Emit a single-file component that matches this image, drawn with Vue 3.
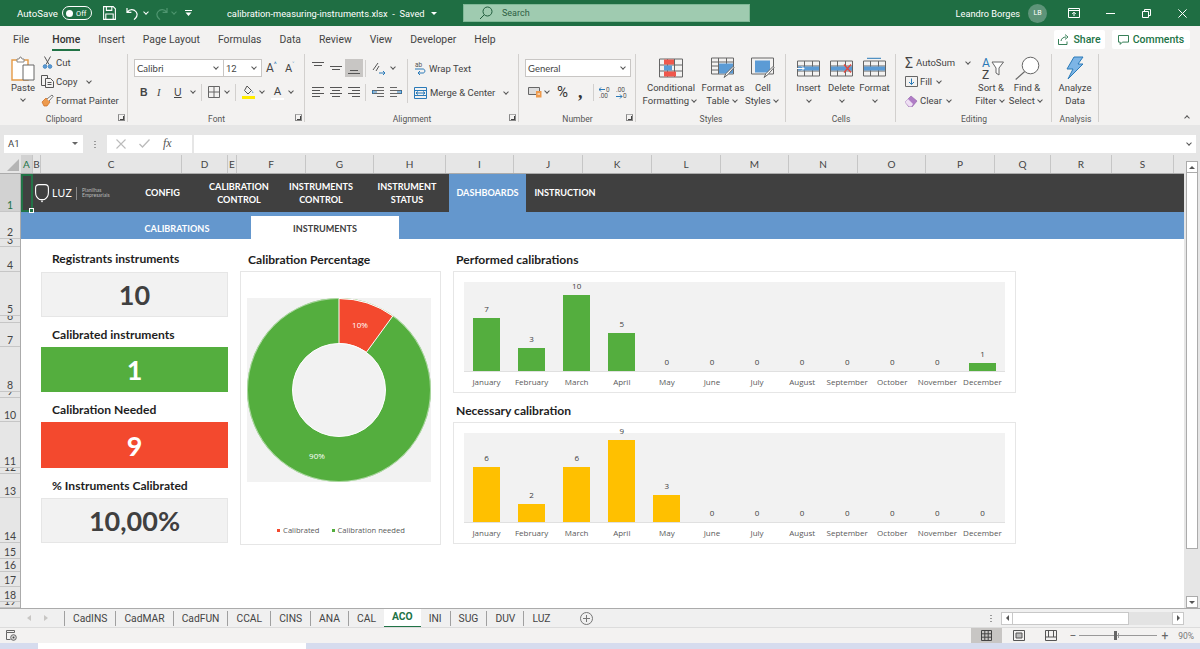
<script setup>
const menu = ['File', 'Home', 'Insert', 'Page Layout', 'Formulas', 'Data', 'Review', 'View', 'Developer', 'Help']
const columns = ['A', 'B', 'C', 'D', 'E', 'F', 'G', 'H', 'I', 'J', 'K', 'L', 'M', 'N', 'O', 'P', 'Q', 'R', 'S']
const rows = ['1', '2', '3', '4', '5', '6', '7', '8', '9', '10', '11', '12', '13', '14', '15', '16', '17', '18', '19']
const tabs = ['CadINS', 'CadMAR', 'CadFUN', 'CCAL', 'CINS', 'ANA', 'CAL', 'ACO', 'INI', 'SUG', 'DUV', 'LUZ']
const months = ['January', 'February', 'March', 'April', 'May', 'June', 'July', 'August', 'September', 'October', 'November', 'December']

const kpis = [
  { title: 'Registrants instruments', value: '10', kind: 'plain' },
  { title: 'Calibrated instruments', value: '1', kind: 'green' },
  { title: 'Calibration Needed', value: '9', kind: 'red' },
  { title: '% Instruments Calibrated', value: '10,00%', kind: 'plain' }
]

const charts = [
  { title: 'Performed calibrations', kind: 'green', unit: 7.56, values: [7, 3, 10, 5, 0, 0, 0, 0, 0, 0, 0, 1] },
  { title: 'Necessary calibration', kind: 'yellow', unit: 9.1, values: [6, 2, 6, 9, 3, 0, 0, 0, 0, 0, 0, 0] }
]

const cellButtons = [
  { label: 'Insert', kind: 'insert' },
  { label: 'Delete', kind: 'delete' },
  { label: 'Format', kind: 'format' }
]
</script>

<template>
  <div class="app">
    <header class="titlebar">
      <span class="autosave">AutoSave</span>
      <span class="toggle"><i></i>Off</span>
      <svg class="qa-save" width="13" height="14" viewBox="0 0 13 14" fill="none" stroke="#fff" stroke-width="1.1">
        <path d="M.6.6h9.6l2.2 2.2v10.6H.6z" /><path d="M3.4.8v3.6h5.4V.8M2.800 13.200V8h7.400v5.200" />
      </svg>
      <svg class="qa-undo" width="13" height="13" viewBox="0 0 13 13" fill="none" stroke="#fff" stroke-width="1.2">
        <path d="M1 1v4.400h4.400M1.200 5.200C3 2.800 6 2 8.600 3.400c2.800 1.600 3.400 5 1 7.600L8 12.600" />
      </svg>
      <span class="caret white qa-c1"></span>
      <svg class="qa-redo" width="13" height="13" viewBox="0 0 13 13" fill="none" stroke="#4f9670" stroke-width="1.2">
        <path d="M12 1v4.400H7.600M11.800 5.200C10 2.800 7 2 4.400 3.400c-2.800 1.600-3.400 5-1 7.600L5 12.600" />
      </svg>
      <span class="caret dim qa-c2"></span>
      <svg class="qa-more" width="7" height="6" viewBox="0 0 7 6" fill="#fff"><path d="M0 0h7v1H0zM.5 2.400h6L3.500 6z" /></svg>
      <span class="filename">calibration-measuring-instruments.xlsx &nbsp;-&nbsp; Saved</span>
      <svg class="saved-arrow" width="6" height="3" viewBox="0 0 6 3" fill="#fff"><path d="M0 0h6L3 3z" /></svg>
      <div class="search">
        <svg width="14" height="14" viewBox="0 0 14 14" fill="none" stroke="#205c3c" stroke-width="1">
          <circle cx="8.500" cy="5.500" r="4.500" /><path d="M5.200 8.800 1 13" />
        </svg>
        <span>Search</span>
      </div>
      <span class="username">Leandro Borges</span>
      <span class="avatar">LB</span>
      <svg class="win-ribbon" width="12" height="10" viewBox="0 0 12 10" fill="none" stroke="#fff" stroke-width="1">
        <path d="M.5.5h11v9H.5zM.5 2.500h11" /><path d="M6 8V4.400M4.200 6 6 4.200 7.800 6" />
      </svg>
      <svg class="win-min" width="9" height="1" viewBox="0 0 9 1"><path d="M0 0h9v1H0z" fill="#fff" /></svg>
      <svg class="win-max" width="9" height="9" viewBox="0 0 9 9" fill="none" stroke="#fff" stroke-width="1">
        <path d="M.5 2.500h6v6h-6zM2.500 2.500v-2h6v6h-2" />
      </svg>
      <svg class="win-close" width="9" height="9" viewBox="0 0 9 9" stroke="#fff" stroke-width="1"><path d="m.4.4 8.200 8.200M8.600.4.4 8.600" /></svg>
    </header>

    <nav class="menubar">
      <span v-for="item in menu" :key="item" :class="['menu-item', { active: item === 'Home' }]">{{ item }}</span>
      <div class="menu-right">
        <button class="pill share">
          <svg width="11" height="11" viewBox="0 0 11 11" fill="none" stroke="#217346" stroke-width=".9">
            <path d="M.5 5v5.500h8.500V7.500M3 7c.4-2.600 2.400-4 5-4M7 .6 10 3 7 5.400" />
          </svg>
          Share
        </button>
        <button class="pill comments">
          <svg width="11" height="10" viewBox="0 0 11 10" fill="none" stroke="#217346" stroke-width=".9">
            <path d="M.5.5h10v6.600H4.400L2.200 9.400V7.100H.5z" />
          </svg>
          Comments
        </button>
      </div>
    </nav>

    <section class="ribbon">
      <!-- clipboard -->
      <div class="group g-clipboard">
        <div class="group-body clip-body">
          <div class="big-btn paste">
            <svg width="24" height="25" viewBox="0 0 24 25" fill="none">
              <path d="M1 4h16v20H1z" stroke="#e59a45" stroke-width="1.400" fill="#fff" />
              <path d="M6 3h2l1-2h1l1 2h2v3H6z" fill="#fff" stroke="#8a8886" />
              <path d="M12 9h11v15H12z" fill="#fff" stroke="#666" />
            </svg>
            <span class="paste-text">Paste</span>
            <span class="caret"></span>
          </div>
          <div class="clip-list">
            <div class="small-row">
              <svg width="13" height="13" viewBox="0 0 13 13" fill="none" stroke="#555">
                <path d="M3.500.5 8 8.500M9.500.5 5 8.500" /><circle cx="4" cy="10.500" r="1.800" fill="#5b9bd5" stroke="#4a8ac4" /><circle cx="9" cy="10.500" r="1.800" fill="#5b9bd5" stroke="#4a8ac4" />
              </svg>
              <span>Cut</span>
            </div>
            <div class="small-row">
              <svg width="13" height="13" viewBox="0 0 13 13" fill="none" stroke="#555">
                <path d="M.5.5h6v10h-6z" /><path d="M4.500 3.500h5l3 3v6h-8z" fill="#f3f2f1" /><path d="M6.500 7.500h4M6.500 9.500h4" />
              </svg>
              <span>Copy</span>
              <span class="caret copy-caret"></span>
            </div>
            <div class="small-row">
              <svg width="13" height="13" viewBox="0 0 13 13" fill="none">
                <path d="m1 8 4-4 4 4-3 4H3z" fill="#ed9a4d" stroke="#c8691c" stroke-width=".7" />
                <path d="m6 5 5-4 1.200 1.200L8 7" fill="#fff" stroke="#555" stroke-width=".8" />
              </svg>
              <span>Format Painter</span>
            </div>
          </div>
        </div>
        <span class="group-label">Clipboard</span>
        <i class="launcher"></i>
      </div>

      <!-- font -->
      <div class="group g-font">
        <div class="group-body tool-rows">
          <div class="tool-row">
            <div class="select font-name"><span>Calibri</span><span class="caret"></span></div>
            <div class="select font-size"><span>12</span><span class="caret"></span></div>
            <span class="grow-a">A<sup>^</sup></span>
            <span class="grow-a shrink">A<sup>˅</sup></span>
          </div>
          <div class="tool-row row-font2">
            <b class="glyph">B</b>
            <i class="glyph serif">I</i>
            <u class="glyph last">U</u>
            <span class="caret"></span>
            <span class="vsep"></span>
            <svg width="12" height="12" viewBox="0 0 12 12" fill="none" stroke="#666"><path d="M.5.5h11v11H.5zM6 .5v11M.5 6h11" /></svg>
            <span class="caret"></span>
            <span class="vsep"></span>
            <svg width="13" height="14" viewBox="0 0 13 14" fill="none">
              <path d="m5 1 4.500 4.500L6 9 2.500 5.500z" stroke="#555" /><path d="M10.500 6c.8 1 1 1.800.5 2.300-.5-.2-.8-1.200-.5-2.300z" fill="#2a7ab8" />
              <path d="M0 11h13v3H0z" fill="#ffeb00" />
            </svg>
            <span class="caret"></span>
            <span class="color-a">A</span>
            <span class="caret"></span>
          </div>
        </div>
        <span class="group-label">Font</span>
        <i class="launcher"></i>
      </div>

      <!-- alignment -->
      <div class="group g-align">
        <div class="group-body align-body">
          <div class="tool-rows align-rows">
            <div class="tool-row row-align">
              <span class="al al-top"><i></i><i></i></span>
              <span class="al al-mid"><i></i><i></i></span>
              <span class="al al-bot on"><i></i><i></i></span>
              <span class="vsep"></span>
              <svg width="14" height="13" viewBox="0 0 14 13" fill="none" stroke="#555">
                <path d="m1 8 5-7M4 9l3-5" stroke-width="1" /><path d="M7 11h6" stroke="#2a7ab8" /><path d="m11 9 2 2-2 2" stroke="#2a7ab8" />
              </svg>
              <span class="caret"></span>
            </div>
            <div class="tool-row row-align">
              <span class="al al-l"><i></i><i></i><i></i><i></i></span>
              <span class="al al-c"><i></i><i></i><i></i><i></i></span>
              <span class="al al-r"><i></i><i></i><i></i><i></i></span>
              <span class="vsep"></span>
              <svg width="12" height="10" viewBox="0 0 12 10" fill="none" stroke="#666"><path d="M5 .5h7M5 9.500h7M0 3.500h12M0 6.500h12" /><path d="M5 5H0m2-2L0 5l2 2" stroke="#2a7ab8" /></svg>
              <svg class="indent2" width="12" height="10" viewBox="0 0 12 10" fill="none" stroke="#666"><path d="M0 .5h7M0 9.500h7M0 3.500h12M0 6.500h12" /><path d="M7 5h5m-2-2 2 2-2 2" stroke="#2a7ab8" /></svg>
            </div>
          </div>
          <span class="vsep tall"></span>
          <div class="wrap-col">
            <div class="small-row">
              <svg width="12" height="13" viewBox="0 0 12 13" fill="none" stroke="#2a7ab8">
                <text x="1" y="5" class="dec">ab</text>
                <path d="M1 7h8c2.500 0 2.500 4 0 4H4m2-2-2 2 2 2" />
              </svg>
              <span>Wrap Text</span>
            </div>
            <div class="small-row merge-row">
              <svg width="13" height="12" viewBox="0 0 13 12" fill="none" stroke="#2a7ab8">
                <path d="M.5.5h12v11H.5z" /><path d="M.5 3.500h12M.5 8.500h12" /><path d="M2 6h9M4 4.500 2 6l2 1.500M9 4.500 11 6 9 7.500" />
              </svg>
              <span>Merge &amp; Center</span>
              <span class="caret merge-caret"></span>
            </div>
          </div>
        </div>
        <span class="group-label">Alignment</span>
        <i class="launcher"></i>
      </div>

      <!-- number -->
      <div class="group g-number">
        <div class="group-body tool-rows">
          <div class="tool-row">
            <div class="select number-format"><span>General</span><span class="caret"></span></div>
          </div>
          <div class="tool-row row-number">
            <svg width="14" height="12" viewBox="0 0 14 12" fill="none">
              <path d="M.5 1.500h11v7H.5z" stroke="#666" fill="#ddd" /><path d="M8 5h5.500v6.500H8z" fill="#ed9a4d" /><path d="M9.500 8h2.500" stroke="#fff" />
            </svg>
            <span class="caret"></span>
            <span class="percent">%</span>
            <b class="comma">,</b>
            <span class="vsep"></span>
            <svg width="13" height="13" viewBox="0 0 13 13" fill="none" stroke="#2a7ab8"><path d="M6 3.500H0m2-2-2 2 2 2" /><text x="7" y="6" class="dec">0</text><text x="0" y="12" class="dec">.00</text></svg>
            <svg class="dec-2" width="13" height="13" viewBox="0 0 13 13" fill="none" stroke="#2a7ab8"><path d="M0 10.500h6m-2-2 2 2-2 2" /><text x="0" y="6" class="dec">.00</text><text x="7" y="12" class="dec">0</text></svg>
          </div>
        </div>
        <span class="group-label">Number</span>
        <i class="launcher"></i>
      </div>

      <!-- styles -->
      <div class="group g-styles">
        <div class="group-body big-row">
          <div class="big-btn styles-cf">
            <svg width="24" height="19" viewBox="0 0 24 19" fill="none" stroke="#666">
              <path d="M.5.5h23v18H.5zM8.500.5v18M15.500.5v18M.5 6.500h23M.5 12.500h23" />
              <path d="M5 1h10v5H5zM5 13h12v5H5z" fill="#f0574c" stroke="none" /><path d="M5 7h8v5H5z" fill="#5b9bd5" stroke="none" />
            </svg>
            <span>Conditional<br />Formatting <i class="caret"></i></span>
          </div>
          <div class="big-btn styles-ft">
            <svg width="24" height="21" viewBox="0 0 24 21" fill="none" stroke="#666">
              <path d="M.5.5h22v16H.5zM.5 4.500h22M.5 8.500h22M.5 12.500h22M7.500.500v16M15.500.500v16" />
              <path d="M8 6h14v10H8z" fill="#5b9bd5" stroke="none" /><path d="m13 20 2-4 7-7 1 1-6 7z" fill="#fff" stroke="#666" />
            </svg>
            <span>Format as<br />Table <i class="caret"></i></span>
          </div>
          <div class="big-btn styles-cs">
            <svg width="24" height="21" viewBox="0 0 24 21" fill="none" stroke="#666">
              <path d="M.5.500h22v16H.5z" /><path d="M4 3h15v12H4z" fill="#5b9bd5" stroke="none" /><path d="m13 20 2-4 7-7 1 1-6 7z" fill="#fff" stroke="#666" />
            </svg>
            <span>Cell<br />Styles <i class="caret"></i></span>
          </div>
        </div>
        <span class="group-label">Styles</span>
      </div>

      <!-- cells -->
      <div class="group g-cells">
        <div class="group-body big-row">
          <div v-for="btn in cellButtons" :key="btn.label" class="big-btn cell-btn">
            <svg width="24" height="21" viewBox="0 0 24 21" fill="none" stroke="#666">
              <path d="M.5 3.500h22v15H.5zM.5 8.500h22M.5 13.500h22M7.500 3.500v15M15.500 3.500v15" />
              <path d="M1 9h21v4H1z" fill="#5b9bd5" stroke="none" />
              <path v-if="btn.kind === 'delete'" d="m14 7 7 8M21 7l-7 8" stroke="#e8443a" stroke-width="1.200" />
              <path v-if="btn.kind === 'format'" d="M4 .8h14" stroke="#2a7ab8" />
              <path v-if="btn.kind === 'insert'" d="M0 11h7m-2-2 2 2-2 2" stroke="#fff" />
            </svg>
            <span>{{ btn.label }}</span>
            <span class="caret"></span>
          </div>
        </div>
        <span class="group-label">Cells</span>
      </div>

      <!-- editing -->
      <div class="group g-editing">
        <div class="group-body editing-body">
          <div class="edit-list">
            <div class="small-row">
              <span class="sigma">Σ</span><span>AutoSum</span><span class="caret sum-caret"></span>
            </div>
            <div class="small-row">
              <svg width="13" height="11" viewBox="0 0 13 11" fill="none" stroke="#666">
                <path d="M.5.500h12v10H.5z" /><path d="M6.500 2.500v6M4 6l2.500 2.500L9 6" stroke="#2a7ab8" />
              </svg>
              <span>Fill</span><span class="caret"></span>
            </div>
            <div class="small-row">
              <svg width="13" height="12" viewBox="0 0 13 12" fill="none">
                <path d="m0 7 6-6 6 5-5 6H4z" fill="#b07cc6" stroke="#9261a8" stroke-width=".6" /><path d="m0 7 3-3 5 5-1.500 2.500H4z" fill="#eedff3" />
              </svg>
              <span>Clear</span><span class="caret"></span>
            </div>
          </div>
          <div class="big-btn sort-btn">
            <svg class="sort-icon" width="25" height="24" viewBox="0 0 25 24" fill="none">
              <text x="3" y="11" class="az az-a">A</text>
              <text x="3" y="23" class="az">Z</text>
              <path d="M13 6h11.500l-4.500 6v7l-3-2v-5z" fill="#fff" stroke="#666" />
            </svg>
            <span>Sort &amp;<br />Filter <i class="caret"></i></span>
          </div>
          <div class="big-btn find-btn">
            <svg width="25" height="24" viewBox="0 0 25 24" fill="none" stroke="#666">
              <circle cx="15.500" cy="9.500" r="8.300" fill="#fff" /><path d="m9.700 15.500-9 8" stroke-width="1.100" />
            </svg>
            <span>Find &amp;<br />Select <i class="caret"></i></span>
          </div>
        </div>
        <span class="group-label">Editing</span>
      </div>

      <!-- analysis -->
      <div class="group g-analysis">
        <div class="group-body big-row">
          <div class="big-btn analyze">
            <svg width="18" height="24" viewBox="0 0 18 24" fill="#7db5e6" stroke="#2a7ab8">
              <path d="M8 1h9l-5 7h5L2 23l5-10H1z" />
            </svg>
            <span>Analyze<br />Data</span>
          </div>
        </div>
        <span class="group-label">Analysis</span>
      </div>

      <span class="caret collapse"></span>
    </section>

    <section class="formulabar">
      <div class="namebox"><span>A1</span><svg width="6" height="3" viewBox="0 0 6 3" fill="#666"><path d="M0 0h6L3 3z" /></svg></div>
      <span class="grip"></span>
      <div class="fx-box">
        <svg width="10" height="10" viewBox="0 0 10 10" stroke="#bbb" stroke-width="1.100"><path d="m.5.5 9 9M9.500.5l-9 9" /></svg>
        <svg width="11" height="9" viewBox="0 0 11 9" fill="none" stroke="#bbb" stroke-width="1.300"><path d="m.5 5 3 3 7-7.500" /></svg>
        <em>fx</em>
      </div>
      <div class="formula-input"><span class="caret fb-caret"></span></div>
    </section>

    <section class="sheet">
      <div class="corner"><svg width="12" height="12" viewBox="0 0 12 12"><path d="M12 0v12H0z" fill="#b4b4b4" /></svg></div>
      <div class="col-headers">
        <span v-for="c in columns" :key="c" :class="{ sel: c === 'A' }">{{ c }}</span>
      </div>
      <div class="vscroll">
        <span class="sb-btn"><svg width="6" height="3" viewBox="0 0 6 3" fill="#555"><path d="M3 0l3 3H0z" /></svg></span>
        <span class="sb-thumb"></span>
        <span class="sb-track"></span>
        <span class="sb-btn"><svg width="6" height="3" viewBox="0 0 6 3" fill="#555"><path d="M0 0h6L3 3z" /></svg></span>
      </div>
      <div class="row-headers">
        <span v-for="r in rows" :key="r" :class="{ sel: r === '1' }"><b>{{ r }}</b></span>
      </div>

      <div class="canvas">
        <div class="nav">
          <div class="selected-cell"></div>
          <div class="logo">
            <svg width="14" height="19" viewBox="0 0 14 19" fill="none" stroke="#fff" stroke-width="1.100">
              <path d="M4.500 15.500C2 14 .6 12 .6 8.500V4C.6 2 2 .6 4 .6h6c2 0 3.400 1.400 3.400 3.400v4.500c0 3.500-1.400 5.500-3.900 7z" />
              <path d="M5.500 16.500h3L7 18.500z" fill="#fff" stroke="none" />
            </svg>
            <span class="logo-name">LUZ</span>
            <span class="logo-sub">Planilhas<br />Empresariais</span>
          </div>
          <span class="nav-item single n-config">CONFIG</span>
          <span class="nav-item n-cal">CALIBRATION<br />CONTROL</span>
          <span class="nav-item n-ins">INSTRUMENTS<br />CONTROL</span>
          <span class="nav-item n-status">INSTRUMENT<br />STATUS</span>
          <span class="nav-item single n-dash">DASHBOARDS</span>
          <span class="nav-item single n-inst">INSTRUCTION</span>
        </div>

        <div class="subnav">
          <span class="sub-item">CALIBRATIONS</span>
          <span class="sub-item current">INSTRUMENTS</span>
        </div>

        <div class="dashboard">
          <div class="kpis">
            <template v-for="k in kpis" :key="k.title">
              <h4 class="kpi-title">{{ k.title }}</h4>
              <div :class="['kpi', k.kind]">{{ k.value }}</div>
            </template>
          </div>

          <div class="donut-col">
            <h4 class="panel-title">Calibration Percentage</h4>
            <div class="panel donut-panel">
              <svg class="donut" width="184" height="184" viewBox="0 0 184 184">
                <rect width="184" height="184" fill="#f2f2f2" />
                <circle cx="92" cy="92" r="69" fill="none" stroke="#54ae3e" stroke-width="46" />
                <path d="M92 .5A91.500 91.500 0 0 1 145.800 18L119.300 54.400A46.500 46.500 0 0 0 92 45.500z" fill="#f3492e" stroke="#fff" stroke-width="1" />
                <circle cx="92" cy="92" r="46.500" fill="#f2f2f2" stroke="#fff" />
                <circle cx="92" cy="92" r="91.500" fill="none" stroke="#fff" stroke-width=".5" />
                <text x="113" y="30" class="donut-label">10%</text>
                <text x="70" y="161" class="donut-label">90%</text>
              </svg>
              <div class="legend">
                <span><i class="sq red"></i>Calibrated</span>
                <span><i class="sq green"></i>Calibration needed</span>
              </div>
            </div>
          </div>

          <div class="charts">
            <div v-for="chart in charts" :key="chart.title" class="chart">
              <h4 class="panel-title">{{ chart.title }}</h4>
              <div class="panel bar-panel">
                <div class="plot">
                  <div v-for="(v, i) in chart.values" :key="months[i]" class="slot">
                    <span class="bar-value">{{ v }}</span>
                    <span :class="['bar', chart.kind]" :style="{ height: v * chart.unit + 'px' }"></span>
                  </div>
                </div>
                <div class="axis">
                  <span v-for="m in months" :key="m">{{ m }}</span>
                </div>
              </div>
            </div>
          </div>
        </div>
      </div>
    </section>

    <footer class="tabbar">
      <div class="tab-arrows">
        <svg width="4" height="6" viewBox="0 0 4 6" fill="#c8c6c4"><path d="M4 0v6L0 3z" /></svg>
        <svg width="4" height="6" viewBox="0 0 4 6" fill="#c8c6c4"><path d="M0 0v6l4-3z" /></svg>
      </div>
      <span v-for="t in tabs" :key="t" :class="['tab', { active: t === 'ACO' }]">{{ t }}</span>
      <svg class="add-sheet" width="13" height="13" viewBox="0 0 13 13" fill="none" stroke="#777"><circle cx="6.500" cy="6.500" r="6" /><path d="M6.500 3v7M3 6.500h7" /></svg>
      <span class="grip h-grip"></span>
      <div class="hscroll">
        <span class="hs-btn"><svg width="3" height="6" viewBox="0 0 3 6" fill="#555"><path d="M3 0v6L0 3z" /></svg></span>
        <span class="hs-thumb"></span>
        <span class="hs-track"></span>
        <span class="hs-btn"><svg width="3" height="6" viewBox="0 0 3 6" fill="#555"><path d="M0 0v6l3-3z" /></svg></span>
      </div>
    </footer>

    <footer class="statusbar">
      <svg class="macro" width="11" height="11" viewBox="0 0 11 11" fill="none" stroke="#666">
        <path d="M.5.500h8v2h-8zM.5 2.500v7h4" /><circle cx="7.500" cy="7.500" r="2.800" fill="#ddd" /><circle cx="7.500" cy="7.500" r="1" fill="#444" stroke="none" />
      </svg>
      <div class="views">
        <span class="view on">
          <svg width="11" height="11" viewBox="0 0 11 11" fill="none" stroke="#444"><path d="M.5.500h10v10H.5zM3.800.5v10M7.200.5v10M.5 3.800h10M.5 7.200h10" /></svg>
        </span>
        <span class="view">
          <svg width="12" height="11" viewBox="0 0 12 11" fill="none" stroke="#555"><path d="M.5.500h11v10H.5z" /><path d="M3 3h6v5H3z" fill="#bbb" /></svg>
        </span>
        <span class="view">
          <svg width="12" height="11" viewBox="0 0 12 11" fill="none" stroke="#555"><path d="M.5.500h11v10H.5zM.5 7h11M3.500.5V7M8.500.5V7" /></svg>
        </span>
      </div>
      <span class="zoom-sign">−</span>
      <div class="zoom-slider"><i class="zoom-tick"></i><i class="zoom-thumb"></i></div>
      <span class="zoom-sign plus">+</span>
      <span class="zoom-pct">90%</span>
    </footer>

    <div class="taskbar"><span></span></div>
  </div>
</template>

<style>
html, body {
  margin: 0;
  overflow: hidden;
  background: #fff;
}
</style>

<style scoped>
.app {
  width: 1200px;
  height: 649px;
  overflow: hidden;
  display: flex;
  flex-direction: column;
  font-family: Roboto, "Noto Sans", sans-serif;
  font-size: 9.5px;
  color: #444;
  background: #f3f2f1;
}

h4 {
  margin: 0;
}

/* chevron used all over the ribbon */
.caret {
  display: inline-block;
  flex: none;
  width: 3px;
  height: 3px;
  margin: 0 3px 2px;
  border-right: 1px solid #555;
  border-bottom: 1px solid #555;
  transform: rotate(45deg);
  vertical-align: middle;
}

.caret.white {
  border-color: #fff;
}

.caret.dim {
  border-color: #4f9670;
}

/* title bar */
.titlebar {
  flex: none;
  height: 26px;
  display: flex;
  align-items: center;
  background: #1f6e43;
  color: #fff;
  font-size: 9.300px;
}

.autosave {
  margin-left: 17px;
  width: 44px;
  font-size: 9.700px;
}

.toggle {
  box-sizing: border-box;
  width: 30px;
  height: 14px;
  margin-left: 1px;
  display: flex;
  align-items: center;
  gap: 3px;
  padding-left: 3px;
  border: 1px solid #fff;
  border-radius: 7px;
  font-size: 7.500px;
}

.toggle i {
  width: 7px;
  height: 7px;
  border-radius: 50%;
  background: #fff;
}

.qa-save {
  margin-left: 11px;
}

.qa-undo {
  margin-left: 10px;
}

.qa-c1 {
  margin-left: 5px;
  margin-right: 0;
}

.qa-redo {
  margin-left: 7px;
}

.qa-c2 {
  margin-left: 4px;
  margin-right: 0;
}

.qa-more {
  margin-left: 9px;
}

.filename {
  margin-left: 35px;
  width: 200px;
  white-space: nowrap;
}

.saved-arrow {
  margin-left: 4px;
}

.search {
  box-sizing: border-box;
  width: 287px;
  height: 18px;
  margin-left: 26px;
  display: flex;
  align-items: center;
  gap: 9px;
  padding-left: 15px;
  background: #9fcbb0;
  border: 1px solid #7fb896;
  color: #2d5e43;
  font-size: 9px;
}

.username {
  margin-left: auto;
  white-space: nowrap;
  font-size: 9.200px;
}

.avatar {
  width: 19px;
  height: 19px;
  margin-left: 8px;
  display: flex;
  align-items: center;
  justify-content: center;
  border-radius: 50%;
  background: #5e9479;
  font-size: 7px;
}

.win-ribbon {
  margin-left: 21px;
}

.win-min {
  margin-left: 26px;
}

.win-max {
  margin-left: 27px;
}

.win-close {
  margin-left: 27px;
  margin-right: 13px;
}

/* menu row */
.menubar {
  flex: none;
  height: 27px;
  display: flex;
  align-items: center;
  gap: 18px;
  padding-left: 13px;
  font-size: 10.400px;
}

.menu-item {
  position: relative;
  white-space: nowrap;
}

.menu-item:first-child {
  margin-right: 5px;
}

.menu-item.active {
  font-weight: 500;
  color: #333;
}

.menu-item.active::after {
  content: "";
  position: absolute;
  left: 0;
  right: 0;
  bottom: -5px;
  height: 2px;
  background: #217346;
}

.menu-right {
  margin-left: auto;
  display: flex;
  gap: 7px;
  margin-right: 10px;
}

.pill {
  height: 19px;
  display: flex;
  align-items: center;
  justify-content: center;
  gap: 4px;
  padding: 0;
  border: 0;
  border-radius: 2px;
  background: #fff;
  color: #217346;
  font: 500 10.500px Roboto, sans-serif;
}

.share {
  width: 51px;
}

.comments {
  width: 78px;
}

/* ribbon */
.ribbon {
  flex: none;
  box-sizing: border-box;
  position: relative;
  height: 77px;
  display: flex;
  border-bottom: 5px solid #e6e6e6;
}

.group {
  box-sizing: border-box;
  position: relative;
  height: 72px;
  display: flex;
  flex-direction: column;
}

.group::after {
  content: "";
  position: absolute;
  right: 0;
  top: 1px;
  bottom: 3px;
  width: 1px;
  background: #d2d0ce;
}

.group-body {
  flex: none;
  box-sizing: border-box;
  height: 60px;
}

.group-label {
  text-align: center;
  font-size: 8.500px;
  color: #555;
  line-height: 12px;
}

.launcher {
  position: absolute;
  right: 3px;
  bottom: 4px;
  width: 5px;
  height: 5px;
  border: 1px solid #888;
  border-top-color: #aaa;
}

.launcher::after {
  content: "";
  position: absolute;
  right: 0;
  bottom: 0;
  width: 3px;
  height: 3px;
  border-right: 1px solid #444;
  border-bottom: 1px solid #444;
}

.g-clipboard { width: 128px; }
.g-font { width: 177px; }
.g-align { width: 214px; }
.g-number { width: 117px; }
.g-styles { width: 150px; }
.g-cells { width: 110px; }
.g-editing { width: 156px; }
.g-analysis { width: 47px; }

.small-row {
  height: 19px;
  display: flex;
  align-items: center;
  gap: 3px;
  white-space: nowrap;
}

.big-btn {
  display: flex;
  flex-direction: column;
  align-items: center;
  text-align: center;
  white-space: nowrap;
  line-height: 12.500px;
}

.big-btn i.caret {
  margin-left: 1px;
}

/* clipboard */
.clip-body {
  display: flex;
  padding-left: 11px;
}

.paste {
  width: 24px;
  padding-top: 3px;
}

.paste-text {
  margin-top: 1px;
}

.paste .caret {
  margin-top: 2px;
}

.clip-list {
  margin-left: 6px;
}

.clip-list .small-row {
  gap: 2px;
}

.copy-caret {
  margin-left: 8px;
}

/* font */
.tool-rows {
  display: flex;
  flex-direction: column;
  gap: 6px;
  padding-top: 6px;
}

.g-font .tool-rows,
.g-number .tool-rows {
  padding-left: 6px;
}

.tool-row {
  height: 18px;
  display: flex;
  align-items: center;
}

.select {
  box-sizing: border-box;
  height: 18px;
  display: flex;
  align-items: center;
  justify-content: space-between;
  padding: 0 2px;
  background: #fff;
  border: 1px solid #c8c6c4;
  color: #444;
}

.font-name {
  width: 90px;
  font-family: "Lato", sans-serif;
}

.font-size {
  width: 38px;
  border-left: 0;
}

.grow-a {
  margin-left: 4px;
  width: 16px;
  font-size: 12px;
  line-height: 1;
}

.grow-a sup {
  font-size: 7px;
  color: #2a7ab8;
  line-height: 0;
}

.shrink {
  margin-left: 3px;
  font-size: 11px;
}

.row-font2 {
  padding-left: 6px;
}

.row-font2 .caret {
  margin-left: 5px;
}

.row-font2 .vsep {
  margin: 0 6px 0 3px;
}

.glyph {
  width: 17px;
  font-size: 10.500px;
  color: #444;
  font-family: "Liberation Sans", sans-serif;
  text-align: left;
}

.glyph.last {
  width: 12px;
}

.glyph.serif {
  font-family: "Liberation Serif", serif;
}

.vsep {
  width: 1px;
  height: 17px;
  margin: 0 5px;
  background: #d2d0ce;
  flex: none;
}

.vsep.tall {
  height: 44px;
  margin: 6px 0 0;
}

.color-a {
  margin-left: 4px;
  width: 13px;
  font-size: 11.500px;
  text-align: center;
  line-height: 13px;
  border-bottom: 2px solid #fff;
}

/* alignment */
.align-body {
  display: flex;
}

.align-rows {
  padding-right: 5px;
}

.row-align {
  padding-left: 4px;
}

.row-align .vsep {
  margin: 0 6px 0 2px;
}

.row-align .caret {
  margin-left: 5px;
}

.indent2 {
  margin-left: 6px;
}

.al {
  box-sizing: border-box;
  width: 18px;
  height: 18px;
  display: flex;
  flex-direction: column;
  justify-content: center;
  align-items: center;
  gap: 2px;
}

.al i {
  display: block;
  width: 12px;
  height: 1px;
  background: #555;
}

.al-top { justify-content: flex-start; padding-top: 3px; }
.al-bot { justify-content: flex-end; padding-bottom: 3px; }
.al.on { background: #c8c6c4; }
.al-l { align-items: flex-start; padding-left: 3px; }
.al-r { align-items: flex-end; padding-right: 3px; }
.al-l i:nth-child(even),
.al-c i:nth-child(even),
.al-r i:nth-child(even) { width: 8px; }
.al-top i:nth-child(2),
.al-mid i:nth-child(2),
.al-bot i:nth-child(1) { width: 8px; }

.wrap-col {
  padding: 6px 0 0 6px;
}

.merge-row {
  margin-top: 5px;
}

.merge-caret {
  margin-left: 6px;
}

/* number */
.number-format {
  width: 106px;
  font-family: "Lato", sans-serif;
}

.row-number {
  padding-left: 3px;
}

.percent {
  margin-left: 5px;
  width: 19px;
  font-size: 15px;
  color: #333;
}

.comma {
  width: 10px;
  margin-left: 2px;
  font-size: 18px;
  line-height: 10px;
  color: #333;
  font-family: "Liberation Serif", serif;
}

.dec {
  font: 6.500px Roboto, sans-serif;
  fill: #555;
  stroke: none;
}

.dec-2 {
  margin-left: 4px;
}

/* big buttons */
.big-row {
  display: flex;
}

.big-row .big-btn svg {
  height: 24px;
  margin: 3px 0 2px;
}

.styles-cf { width: 70px; }
.styles-ft { width: 34px; }
.styles-cs { width: 46px; }

.cell-btn {
  width: 33px;
}

.cell-btn:first-child {
  margin-left: 6px;
}

.cell-btn .caret {
  margin-top: 3px;
}

.editing-body {
  display: flex;
}

.edit-list {
  width: 77px;
  padding-left: 9px;
  box-sizing: border-box;
}

.edit-list .small-row {
  gap: 2px;
}

.sigma {
  width: 12px;
  margin-right: 1px;
  font-size: 14px;
  line-height: 1;
  text-align: center;
}

.sum-caret {
  margin-left: 9px;
}

.sort-btn {
  width: 36px;
  padding-top: 3px;
}

.sort-icon {
  overflow: visible;
}

.sort-btn svg,
.find-btn svg {
  margin-bottom: 2px;
}

.find-btn {
  width: 36px;
  padding-top: 3px;
}

.az {
  font: 12px Roboto, sans-serif;
  fill: #444;
}

.az-a {
  fill: #2a7ab8;
}

.analyze {
  width: 46px;
}

.collapse {
  position: absolute;
  right: 8px;
  bottom: 3px;
  transform: rotate(225deg);
}

/* formula bar */
.formulabar {
  flex: none;
  height: 25px;
  display: flex;
  align-items: center;
  padding: 2px 4px 0;
  box-sizing: border-box;
  background: #e6e6e6;
}

.namebox {
  box-sizing: border-box;
  width: 79px;
  height: 18px;
  display: flex;
  align-items: center;
  justify-content: space-between;
  padding: 0 5px 0 4px;
  background: #fff;
}

.grip {
  width: 2px;
  height: 8px;
  background: radial-gradient(circle, #999 45%, transparent 50%) 0 0 / 2px 3px;
}

.formulabar .grip {
  margin: 0 11px;
}

.fx-box {
  box-sizing: border-box;
  width: 85px;
  height: 18px;
  display: flex;
  align-items: center;
  gap: 13px;
  padding-left: 9px;
  background: #fff;
}

.fx-box em {
  font: italic 12px "Liberation Serif", serif;
  color: #555;
}

.formula-input {
  flex: 1;
  height: 18px;
  margin-left: 2px;
  background: #fff;
  display: flex;
  align-items: center;
  justify-content: flex-end;
}

.fb-caret {
  margin-right: 5px;
}

/* worksheet */
.sheet {
  flex: none;
  height: 453px;
  display: grid;
  grid-template-columns: 21px 1163px 16px;
  grid-template-rows: 19px 434px;
  background: #e6e6e6;
  font-family: "Lato", sans-serif;
}

.corner {
  display: flex;
  align-items: flex-end;
  justify-content: flex-end;
  padding: 0 2px 2px 0;
  box-sizing: border-box;
  border-bottom: 1px solid #ababab;
}

.col-headers {
  display: grid;
  grid-template-columns: 12px 8px 141px 46px 9px 69px 68px 72px 68px 69px 69px 69px 68px 69px 68px 69px 56px 61px 62px;
  border-bottom: 1px solid #ababab;
}

.col-headers span {
  display: flex;
  align-items: center;
  justify-content: center;
  border-right: 1px solid #c6c6c6;
  font-size: 10px;
  color: #444;
}

.col-headers .sel {
  background: #d2d2d2;
  color: #217346;
}

.vscroll {
  grid-row: 1 / 3;
  grid-column: 3;
  display: flex;
  flex-direction: column;
  padding: 6px 2px 0;
  box-sizing: border-box;
  background: #e6e6e6;
}

.sb-btn {
  flex: none;
  height: 12px;
  display: flex;
  align-items: center;
  justify-content: center;
  background: #fff;
  border: 1px solid #ababab;
  box-sizing: border-box;
}

.sb-thumb {
  flex: none;
  height: 376px;
  background: #fff;
  border: 1px solid #ababab;
  border-top: 0;
  box-sizing: border-box;
}

.sb-track {
  flex: 1;
}

.row-headers {
  display: grid;
  grid-template-rows: 38px 27px 8px 25px 44px 7px 24px 45px 6px 24px 46px 6px 24px 45px 16px 13px 15px 15px 6px;
  overflow: hidden;
  border-right: 1px solid #ababab;
  box-sizing: border-box;
}

.row-headers span {
  display: flex;
  align-items: flex-end;
  justify-content: center;
  overflow: hidden;
  border-bottom: 1px solid #c6c6c6;
  font-size: 10.500px;
  box-sizing: border-box;
}

.row-headers b {
  font-weight: 400;
  line-height: 11px;
  flex: none;
}

.row-headers .sel {
  background: #d2d2d2;
  color: #217346;
}

.canvas {
  display: flex;
  flex-direction: column;
  background: #fff;
  min-width: 0;
}

/* sheet navigation */
.nav {
  position: relative;
  flex: none;
  height: 38px;
  display: flex;
  align-items: center;
  background: #404040;
  color: #fff;
  font-weight: 700;
  font-size: 9.100px;
  line-height: 13px;
  text-align: center;
}

.selected-cell {
  position: absolute;
  left: 0;
  top: 0;
  width: 12px;
  height: 38px;
  box-sizing: border-box;
  border: 2px solid #217346;
}

.selected-cell::after {
  content: "";
  position: absolute;
  right: -3px;
  bottom: -3px;
  width: 5px;
  height: 5px;
  background: #217346;
  border: 1px solid #fff;
  box-sizing: border-box;
}

.logo {
  width: 103px;
  box-sizing: border-box;
  padding-left: 14px;
  display: flex;
  align-items: center;
  gap: 3px;
  text-align: left;
}

.logo-name {
  padding-right: 4px;
  border-right: 1px solid #888;
  font-weight: 400;
  font-size: 10.500px;
  letter-spacing: .3px;
}

.logo-sub {
  padding-left: 2px;
  font-weight: 400;
  font-size: 5px;
  line-height: 5.500px;
  color: #bbb;
  white-space: nowrap;
}

.nav-item {
  align-self: stretch;
  display: flex;
  align-items: center;
  justify-content: center;
}

.nav-item.single {
  padding-bottom: 2px;
  box-sizing: border-box;
}

.n-config { width: 77px; }
.n-cal { width: 76px; }
.n-ins { width: 88px; }
.n-status { width: 84px; }
.n-dash { width: 77px; background: #6497cd; }
.n-inst { width: 78px; }

.subnav {
  flex: none;
  height: 27px;
  display: flex;
  align-items: flex-end;
  padding-left: 82px;
  background: #6497cd;
  font-size: 9.100px;
  font-weight: 700;
}

.sub-item {
  width: 148px;
  height: 23px;
  line-height: 25px;
  text-align: center;
  color: #fff;
}

.sub-item.current {
  background: #fff;
  color: #404040;
}

/* dashboard */
.dashboard {
  flex: 1;
  display: flex;
  gap: 12px;
  padding: 11px 0 0 20px;
  color: #222;
}

.kpis {
  width: 187px;
}

.kpi-title {
  height: 30px;
  box-sizing: border-box;
  padding: 8px 0 0 11px;
  line-height: 20px;
  font-size: 12.100px;
  font-weight: 700;
  color: #1e1e1e;
}

.kpi-title:first-child {
  height: 22px;
  padding-top: 0;
  line-height: 18px;
}

.kpi {
  box-sizing: border-box;
  height: 45px;
  display: flex;
  align-items: center;
  justify-content: center;
  font-size: 27px;
  font-weight: 700;
}

.kpi.plain {
  background: #f2f2f2;
  border: 1px solid #e6e6e6;
  color: #404040;
}

.kpi.green {
  background: #54ae3e;
  color: #fff;
}

.kpi.red {
  height: 46px;
  background: #f3492e;
  color: #fff;
}

.donut-col {
  width: 201px;
}

.panel-title {
  height: 21px;
  line-height: 19px;
  padding-left: 8px;
  font-size: 12.100px;
  font-weight: 700;
  color: #1e1e1e;
}

.panel {
  box-sizing: border-box;
  background: #fff;
  border: 1px solid #e6e6e6;
}

.donut-panel {
  height: 274px;
  padding: 26px 0 0 6px;
}

.donut {
  display: block;
}

.donut-label {
  font: 8px "Open Sans", sans-serif;
  fill: #fff;
  text-anchor: middle;
}

.legend {
  display: flex;
  justify-content: center;
  gap: 12px;
  margin: 43px 0 0 -5px;
  font: 7.600px "Open Sans", sans-serif;
  color: #595959;
}

.sq {
  display: inline-block;
  width: 3px;
  height: 3px;
  margin-right: 3px;
  vertical-align: 1px;
}

.sq.red { background: #f3492e; }
.sq.green { background: #54ae3e; }

.charts {
  width: 563px;
}

.chart .panel-title {
  padding-left: 3px;
}

.chart + .chart {
  margin-top: 8px;
}

.bar-panel {
  height: 122px;
  padding: 10px 10px 0;
}

.plot {
  height: 90px;
  display: grid;
  grid-template-columns: repeat(12, 1fr);
  grid-template-rows: 89px;
  background: #f2f2f2;
  border-bottom: 1px solid #e0e0e0;
  box-sizing: border-box;
}

.slot {
  min-height: 0;
  display: flex;
  flex-direction: column;
  align-items: center;
  justify-content: flex-end;
}

.bar-value {
  font: 8px "Open Sans", sans-serif;
  line-height: 19px;
  color: #404040;
}

.bar {
  flex: none;
  width: 27px;
}

.bar.green { background: #54ae3e; }
.bar.yellow { background: #ffc000; }

.axis {
  display: grid;
  grid-template-columns: repeat(12, 1fr);
  height: 20px;
  text-align: center;
  font: 8px/20px "Open Sans", sans-serif;
  color: #595959;
  white-space: nowrap;
}

/* sheet tabs */
.tabbar {
  flex: none;
  height: 19px;
  display: flex;
  align-items: center;
  background: #f0f0f0;
  border-top: 1px solid #ababab;
  box-sizing: border-box;
  font-family: Roboto, sans-serif;
}

.tab-arrows {
  width: 64px;
  display: flex;
  justify-content: center;
  gap: 13px;
  box-sizing: border-box;
  padding-left: 11px;
}

.tab {
  height: 15px;
  line-height: 15px;
  padding: 0 8px;
  border-left: 1px solid #a0a0a0;
  font-size: 10.300px;
  color: #444;
}

.tab:last-of-type {
  border-right: 1px solid #a0a0a0;
}

.tab.active {
  align-self: stretch;
  height: auto;
  line-height: 16px;
  background: #fff;
  border: 0;
  border-bottom: 1.500px solid #217346;
  color: #217346;
  font-weight: 700;
}

.tab.active + .tab {
  border-left: 0;
}

.add-sheet {
  margin-left: 21px;
}

.h-grip {
  margin-left: auto;
  margin-right: 9px;
}

.hscroll {
  width: 183px;
  height: 13px;
  margin-right: 16px;
  display: flex;
}

.hs-btn {
  width: 12px;
  display: flex;
  align-items: center;
  justify-content: center;
  background: #fff;
  border: 1px solid #c8c8c8;
  box-sizing: border-box;
}

.hs-thumb {
  width: 116px;
  background: #fff;
  border: 1px solid #c8c8c8;
  border-left: 0;
  box-sizing: border-box;
}

.hs-track {
  flex: 1;
  background: #e3e3e3;
}

/* status bar */
.statusbar {
  flex: none;
  height: 16px;
  display: flex;
  align-items: center;
  background: #f3f2f1;
  border-top: 1px solid #dcdcdc;
  box-sizing: border-box;
  color: #666;
}

.macro {
  margin-left: 6px;
}

.views {
  margin-left: auto;
  display: flex;
  align-self: stretch;
}

.view {
  width: 31px;
  display: flex;
  align-items: center;
  justify-content: center;
  margin-right: 1px;
}

.view.on {
  background: #c8c6c4;
}

.zoom-sign {
  width: 12px;
  text-align: center;
  font-size: 12px;
  line-height: 1;
}

.zoom-sign.plus {
  margin-left: 2px;
}

.zoom-slider {
  position: relative;
  width: 78px;
  height: 1px;
  background: #999;
}

.zoom-tick {
  position: absolute;
  left: 39px;
  top: -2px;
  width: 1px;
  height: 5px;
  background: #999;
}

.zoom-thumb {
  position: absolute;
  left: 35px;
  top: -4px;
  width: 3px;
  height: 9px;
  background: #666;
}

.zoom-pct {
  width: 18px;
  margin: 0 6px 0 5px;
  font-size: 8.500px;
  text-align: right;
  color: #777;
}

/* strip of the desktop under the window */
.taskbar {
  flex: none;
  height: 6px;
  background: #d6dcee;
}

.taskbar span {
  display: block;
  width: 268px;
  height: 100%;
  margin-left: 38px;
  background: #fff;
}
</style>
